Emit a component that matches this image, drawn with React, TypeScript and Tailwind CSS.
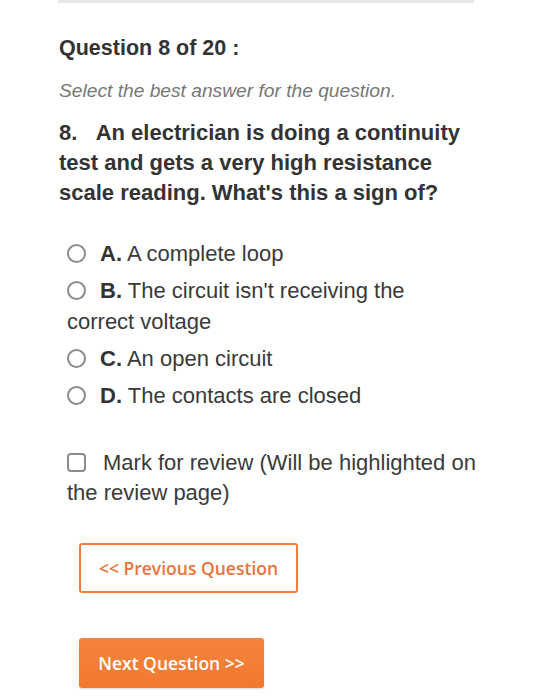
import React from "react";

const options = [
    { key: "A", text: "A complete loop" },
    { key: "B", text: "The circuit isn't receiving the correct voltage" },
    { key: "C", text: "An open circuit" },
    { key: "D", text: "The contacts are closed" },
];

export default function App() {
    return (
        <div className="min-h-[700px] w-[534px] bg-white" style={{ fontFamily: '"Liberation Sans", Arial, sans-serif' }}>
            <div className="ml-[58px] w-[416px]">
                <div className="h-[3px] w-full bg-[#e6e6e6]" />

                <h2 className="mt-[30px] pl-[1px] text-[21.5px] font-bold leading-[30px] text-[#333]">Question 8 of 20 :</h2>
                <p className="mt-[15px] pl-[1px] text-[19.2px] italic leading-[26px] text-[#777]">Select the best answer for the question.</p>

                <p className="mt-[14px] pl-[1px] text-[22px] font-bold leading-[30px] text-[#333]">
                    8.&nbsp;&nbsp;&nbsp;An electrician is doing a continuity test and gets a very high resistance scale reading. What's this a sign of?
                </p>

                <div className="mt-[30px] flex flex-col gap-[6px] pl-[9px] pr-2">
                    {options.map((o) => (
                        <label key={o.key} className="block text-[22px] leading-[31px] text-[#3a3a3a]">
                            <span className="mr-[14px] inline-block h-[19px] w-[19px] rounded-full border-2 border-[#8c8c8c] align-[-2px]" />
                            <b className="text-[#333]">{o.key}.</b> {o.text}
                        </label>
                    ))}
                </div>

                <label className="mt-[37px] block w-[430px] pl-[9px] text-[22px] leading-[30px] text-[#3a3a3a]">
                    <span className="mr-[17px] inline-block h-[19px] w-[19px] rounded-[4px] border-2 border-[#8c8c8c] align-[-2px]" />
                    Mark for review (Will be highlighted on the review page)
                </label>

                <div className="ml-[21px] mt-[35px] flex flex-col items-start" style={{ fontFamily: '"Open Sans", sans-serif' }}>
                    <button className="flex h-[50px] w-[219px] items-center justify-center rounded-[3px] border-2 border-[#ef7f3b] bg-white text-[17.5px] font-semibold text-[#e9743a]">
                        &lt;&lt; Previous Question
                    </button>
                    <button className="mt-[45px] flex h-[50px] w-[185px] items-center justify-center rounded-[3px] bg-gradient-to-b from-[#f5843c] to-[#f3782f] text-[17.5px] font-semibold text-white shadow-[0_1px_2px_rgba(0,0,0,0.15)]">
                        Next Question &gt;&gt;
                    </button>
                </div>
            </div>
        </div>
    );
}
